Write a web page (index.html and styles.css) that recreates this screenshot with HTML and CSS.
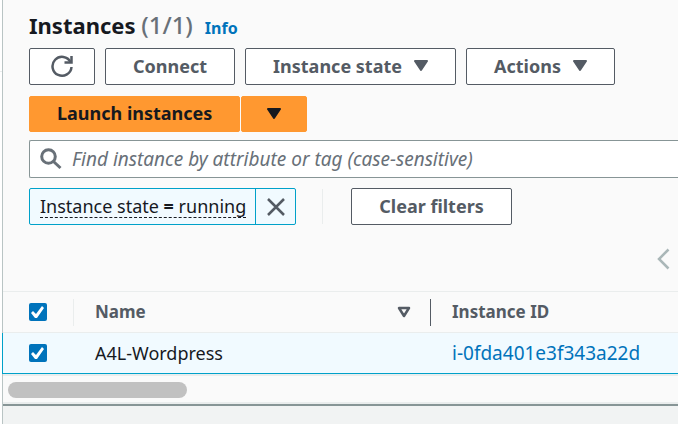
FILE: index.html
```html
<!DOCTYPE html>
<html lang="en">
<head>
<meta charset="utf-8">
<title>Instances</title>
<link rel="stylesheet" href="styles.css">
</head>
<body>
<div class="shell">
  <div class="rail"></div>
  <main class="main">
    <section class="panel">
      <header class="heading">
        <h1 class="title">Instances <span class="count">(1/1)</span></h1>
        <a class="info" href="#">Info</a>
      </header>
      <div class="row actions">
        <button class="btn icon-btn" type="button" aria-label="Refresh">
          <svg width="24" height="24" viewBox="0 0 24 24" fill="none" stroke="currentColor" stroke-width="2.5"><path d="M21.500 13A9.500 9.500 0 1 1 20.500 8"/><path d="M21.500 2V8.500H14.500"/></svg>
        </button>
        <button class="btn" type="button">Connect</button>
        <button class="btn" type="button">Instance state
          <svg width="14" height="12" viewBox="0 0 14 12"><path d="M1 1H13L7 10Z" fill="currentColor" stroke="currentColor" stroke-width="2" stroke-linejoin="round"/></svg>
        </button>
        <button class="btn" type="button">Actions
          <svg width="14" height="12" viewBox="0 0 14 12"><path d="M1 1H13L7 10Z" fill="currentColor" stroke="currentColor" stroke-width="2" stroke-linejoin="round"/></svg>
        </button>
      </div>
      <div class="row launch">
        <button class="btn primary" type="button">Launch instances</button>
        <button class="btn primary icon-btn" type="button" aria-label="More launch options">
          <svg width="14" height="12" viewBox="0 0 14 12"><path d="M1 1H13L7 10Z" fill="currentColor" stroke="currentColor" stroke-width="2" stroke-linejoin="round"/></svg>
        </button>
      </div>
      <div class="search">
        <svg width="22" height="22" viewBox="0 0 22 22" fill="none" stroke="currentColor" stroke-width="3"><circle cx="8.500" cy="8.500" r="6.800"/><path d="M13.500 13.500L20.500 20"/></svg>
        <input type="text" aria-label="Find instance" placeholder="Find instance by attribute or tag (case-sensitive)">
      </div>
      <div class="row filters">
        <div class="token">
          <button class="token-label" type="button"><span>Instance state <b>=</b> running</span></button>
          <button class="token-close" type="button" aria-label="Remove filter">
            <svg width="20" height="20" viewBox="0 0 20 20" fill="none" stroke="currentColor" stroke-width="2.500"><path d="M2 2L18 18M18 2L2 18"/></svg>
          </button>
        </div>
        <button class="btn" type="button">Clear filters</button>
      </div>
      <nav class="pager">
        <button type="button" aria-label="Previous page">
          <svg width="14" height="22" viewBox="0 0 14 22" fill="none" stroke="currentColor" stroke-width="2.500"><path d="M12.500 1.500L3 11L12.500 20.500"/></svg>
        </button>
      </nav>
      <table class="grid">
        <colgroup><col class="col-check"><col class="col-name"><col></colgroup>
        <thead>
          <tr>
            <th><input type="checkbox" aria-label="Select all" checked></th>
            <th><div class="cell">Name
              <svg width="14" height="12" viewBox="0 0 14 12" fill="none" stroke="currentColor" stroke-width="2.500" stroke-linejoin="round"><path d="M2 2H12L7 10Z"/></svg></div></th>
            <th class="strong"><div class="cell">Instance ID</div></th>
          </tr>
        </thead>
        <tbody>
          <tr>
            <td><input type="checkbox" aria-label="Select A4L-Wordpress" checked></td>
            <td><div class="cell">A4L-Wordpress</div></td>
            <td><div class="cell"><a class="id" href="#">i-0fda401e3f343a22d</a></div></td>
          </tr>
        </tbody>
      </table>
      <div class="scroll"><div class="thumb"></div></div>
    </section>
  </main>
</div>
</body>
</html>
```
FILE: styles.css
```css
* { box-sizing: border-box; }
body {
  margin: 0;
  overflow: hidden;
  background: #f1f3f3;
  color: #16191f;
  font: 18px/24px "Noto Sans", "Open Sans", sans-serif;
}
button, input { font: inherit; color: inherit; margin: 0; }
svg { display: block; flex: none; }
a { color: #0073bb; text-decoration: none; }

.shell { display: flex; min-height: 100vh; }
.rail {
  width: 2px;
  background: linear-gradient(#eaeded, #eaeded) 0 71px / 2px 1px no-repeat #fff;
}
.main { flex: 1; min-width: 0; border-left: 1px solid #b9c4c4; }
.panel { background: #fafafa; border-bottom: 2px solid #879596; }

.heading { display: flex; align-items: baseline; gap: 12px; padding: 9px 26px 7px; }
.title { margin: 0; font-size: 22px; line-height: 32px; }
.count { color: #687078; font-size: 24px; font-weight: 500; }
.info { font-size: 16px; font-weight: 700; }

.row { display: flex; align-items: center; padding-left: 26px; }
.actions { gap: 10px; }
.btn {
  display: flex;
  align-items: center;
  justify-content: center;
  gap: 12px;
  height: 37px;
  padding: 0 27px 2px;
  border: 1px solid #545b64;
  border-radius: 2px;
  background: #fff;
  color: #545b64;
  font-weight: 700;
  line-height: 22px;
  white-space: nowrap;
}
.icon-btn { width: 66px; padding: 0 0 1px; }
.launch { gap: 1px; margin-top: 11px; }
.primary { height: 36px; border-color: #ff9830; background: #ff9830; color: #16191f; }

.search {
  display: flex;
  align-items: center;
  gap: 10px;
  height: 38px;
  margin: 8px 0 10px 26px;
  padding-left: 10px;
  border: 1px solid #879596;
  border-right: 0;
  border-radius: 2px 0 0 2px;
  background: #fff;
  color: #687078;
}
.search input { flex: 1; min-width: 0; padding: 0; border: 0; outline: 0; background: none; font-size: 19px; }
.search input::placeholder { color: #687078; font-style: italic; opacity: 1; }

.token {
  display: flex;
  height: 37px;
  margin-right: 55px;
  border: 1px solid #00a1c9;
  border-radius: 2px;
  background: #f1faff;
  position: relative;
}
.token::after {
  content: "";
  position: absolute;
  left: calc(100% + 27px);
  top: 0;
  height: 100%;
  border-left: 1px solid #eaeded;
}
.token button { display: flex; align-items: center; border: 0; background: none; white-space: nowrap; }
.token .token-label { padding: 0 9px 0 10px; }
.token-label span { border-bottom: 1px dashed #16191f; line-height: 22px; }
.token .token-close { width: 40px; padding: 0; justify-content: center; border-left: 1px solid #00a1c9; color: #545b64; }

.pager { display: flex; justify-content: flex-end; padding: 23px 8px 21px; }
.pager button { padding: 0; border: 0; background: none; color: #aab7b8; }

.grid { width: 100%; table-layout: fixed; border-collapse: separate; border-spacing: 0; text-align: left; }
.col-check { width: 70px; }
.col-name { width: 357px; }
.grid th, .grid td { padding: 0; height: 41px; }
.grid th { border-top: 1px solid #eaeded; border-bottom: 1px solid #eaeded; color: #545b64; height: 42px; font-size: 17px; }
.grid td { background: #f1faff; border-bottom: 1px solid #00a1c9; }
.grid tbody td:first-child { box-shadow: -1px 0 #00a1c9; }
.cell { display: flex; align-items: center; justify-content: space-between; padding: 0 19px 0 22px; white-space: nowrap; }
.grid th .cell { height: 27px; border-left: 1px solid #eaeded; padding-left: 21px; }
.grid th.strong .cell { border-color: #545b64; }
.id { font-size: 19px; }
.grid input {
  appearance: none;
  display: block;
  width: 18px;
  height: 18px;
  margin-left: 26px;
  border-radius: 2px;
  background: #0073bb;
}
.grid input:checked::before {
  content: "";
  display: block;
  width: 18px;
  height: 18px;
  background: #fff;
  clip-path: polygon(2px 10px, 4px 8px, 7px 11px, 13px 3px, 15px 5px, 8px 15px, 6px 15px);
}
.scroll { padding: 6px 5px 4px; border: solid #eaeded; border-width: 2px 0; }
.thumb { width: 179px; height: 16px; border-radius: 8px; background: #c1c1c1; }
```
